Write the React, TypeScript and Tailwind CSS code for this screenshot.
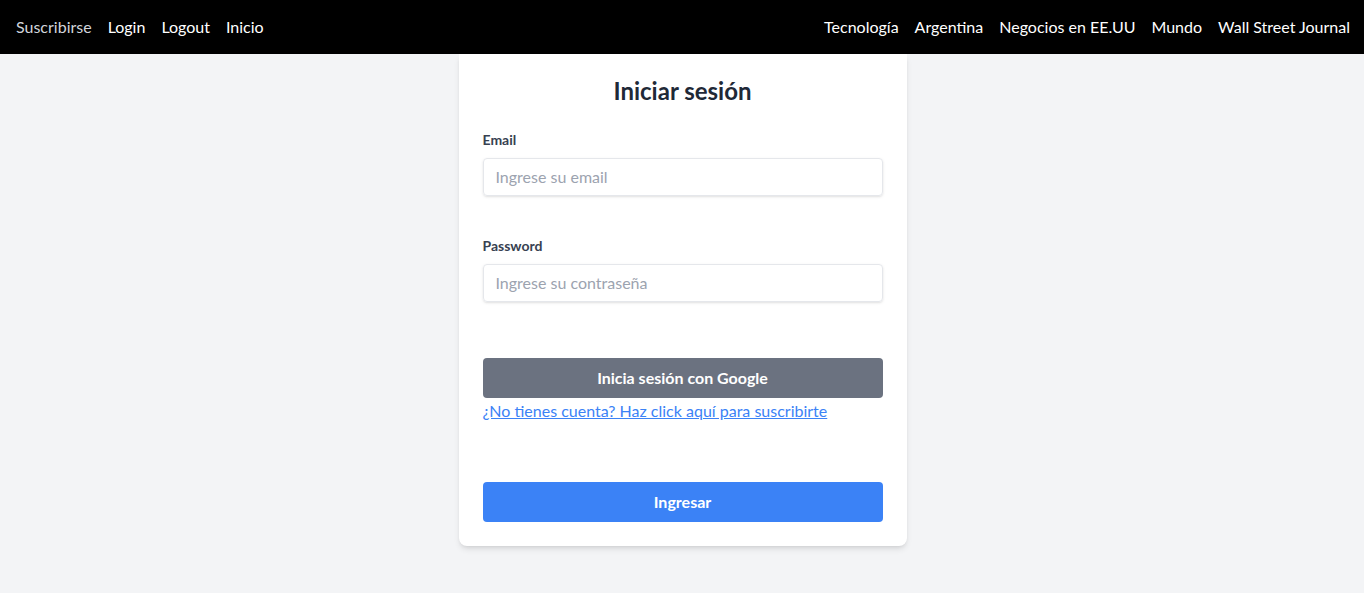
export default function App() {
  const left = ["Login", "Logout", "Inicio"];
  const right = ["Tecnología", "Argentina", "Negocios en EE.UU", "Mundo", "Wall Street Journal"];

  return (
    <div className="min-h-[593px] bg-[#f3f4f6] font-['Lato',sans-serif]">
      {/* top nav */}
      <nav className="flex h-[54px] items-center justify-between bg-black pl-4 pr-[14px] pb-px text-base">
        <div className="flex items-center gap-4">
          <a href="#" className="text-[#d1d5db]">Suscribirse</a>
          {left.map((item) => (
            <a key={item} href="#" className="text-white">{item}</a>
          ))}
        </div>
        <div className="flex items-center gap-4">
          {right.map((item) => (
            <a key={item} href="#" className="text-white">{item}</a>
          ))}
        </div>
      </nav>

      {/* login card */}
      <div className="flex justify-center pl-px">
        <div className="w-[448px] rounded-b-lg bg-white px-6 pt-[21px] pb-6 shadow-md">
          <h2 className="mb-[23px] text-center text-2xl font-bold text-[#1f2937]">Iniciar sesión</h2>

          <div className="mb-10">
            <label className="mb-2 block text-sm font-bold text-[#374151]">Email</label>
            <input
              type="email"
              placeholder="Ingrese su email"
              className="w-full rounded border border-[#e5e7eb] px-3 py-2 leading-tight text-[#374151] shadow-sm outline-none placeholder:text-[#9ca3af]"
            />
          </div>

          <div className="mb-14">
            <label className="mb-2 block text-sm font-bold text-[#374151]">Password</label>
            <input
              type="password"
              placeholder="Ingrese su contraseña"
              className="w-full rounded border border-[#e5e7eb] px-3 py-2 leading-tight text-[#374151] shadow-sm outline-none placeholder:text-[#9ca3af]"
            />
          </div>

          <button className="w-full rounded bg-[#6b7280] py-2 font-bold text-white">Inicia sesión con Google</button>
          <a href="#" className="mt-px block text-[#3b82f6] underline">¿No tienes cuenta? Haz click aquí para suscribirte</a>

          <button className="mt-[59px] w-full rounded bg-[#3b82f6] py-2 font-bold text-white">Ingresar</button>
        </div>
      </div>
    </div>
  );
}
